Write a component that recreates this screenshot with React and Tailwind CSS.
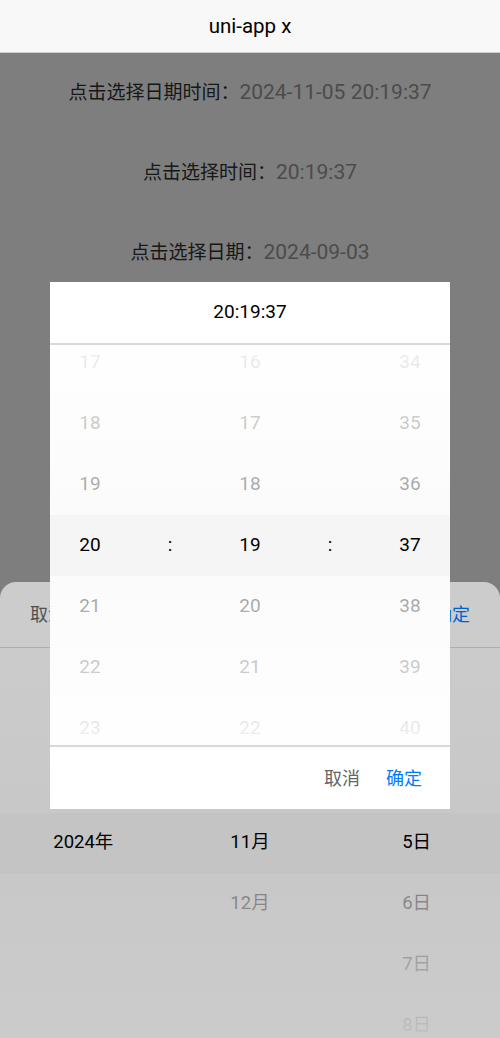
import React from 'react'

const hours = ['17', '18', '19', '20', '21', '22', '23']
const minutes = ['16', '17', '18', '19', '20', '21', '22']
const seconds = ['34', '35', '36', '37', '38', '39', '40']
const colon = ['', '', '', ':', '', '', '']

// rows above the selected one sit under the time dialog, so they are left blank
const years = ['', '', '', '2024年', '', '', '']
const months = ['', '', '', '11月', '12月', '', '']
const days = ['', '', '', '5日', '6日', '7日', '8日']

const Column = ({ items, className }) => (
  <div className={`flex flex-col justify-center overflow-hidden ${className}`}>
    {items.map((item, i) => (
      <div key={i} className="h-[61px] shrink-0 flex items-center justify-center">
        {item}
      </div>
    ))}
  </div>
)

const rows = [
  { label: '点击选择日期时间：', value: '2024-11-05 20:19:37' },
  { label: '点击选择时间：', value: '20:19:37' },
  { label: '点击选择日期：', value: '2024-09-03' },
]

export default function App() {
  return (
    <div className="relative w-full h-[1038px] overflow-hidden bg-white font-['Roboto','Noto_Sans_CJK_SC',sans-serif]">
      {/* Navigation bar */}
      <div className="h-[53px] bg-[#f8f8f8] border-b border-[#cfcfcf] flex items-center justify-center">
        <span className="text-[20.5px] text-black">uni-app x</span>
      </div>

      {/* Page content */}
      <div className="flex flex-col">
        {rows.map((row) => (
          <div key={row.label} className="h-[80px] flex items-center justify-center">
            <span className="text-[19px] text-[#333]">{row.label}</span>
            <span className="text-[21px] text-[#999]">{row.value}</span>
          </div>
        ))}
      </div>

      {/* Date picker mask */}
      <div className="absolute inset-x-0 top-[53px] bottom-0 bg-black/[0.38]"></div>

      {/* Date picker bottom sheet */}
      <div className="absolute inset-x-0 bottom-0 h-[456px] bg-white rounded-t-[16px] overflow-hidden">
        <div className="h-[66px] border-b border-[#d9d9d9] flex items-center justify-between px-[30px] text-[18px]">
          <span className="text-[#666]">取消</span>
          <span className="text-[#007aff]">确定</span>
        </div>
        <div className="relative h-[390px] bg-[#f5f5f5] flex text-[18.5px] text-black">
          <Column items={years} className="flex-1" />
          <Column items={months} className="flex-1" />
          <Column items={days} className="flex-1" />
          <div className="absolute inset-x-0 top-0 h-[164.5px] bg-linear-to-b from-white/95 to-white/60"></div>
          <div className="absolute inset-x-0 bottom-0 h-[164.5px] bg-linear-to-t from-white/95 to-white/60"></div>
        </div>
      </div>

      {/* Time picker mask + dialog */}
      <div className="absolute inset-x-0 top-[53px] bottom-0 bg-black/20 flex items-center justify-center">
        <div className="w-[400px] bg-white">
          <div className="h-[63px] border-b-2 border-[#d9d9d9] flex items-center justify-center text-[19px] text-black">
            20:19:37
          </div>
          <div className="relative h-[400px] bg-[#f5f5f5] flex text-[19px] text-black">
            <Column items={hours} className="w-[80px]" />
            <Column items={colon} className="w-[80px]" />
            <Column items={minutes} className="w-[80px]" />
            <Column items={colon} className="w-[80px]" />
            <Column items={seconds} className="w-[80px]" />
            <div className="absolute inset-x-0 top-0 h-[169.5px] bg-linear-to-b from-white/95 to-white/60"></div>
            <div className="absolute inset-x-0 bottom-0 h-[169.5px] bg-linear-to-t from-white/95 to-white/60"></div>
          </div>
          <div className="h-[64px] border-t-2 border-[#d9d9d9] flex items-center justify-end pr-[15px] text-[18px]">
            <span className="px-[13px] text-[#666]">取消</span>
            <span className="px-[13px] text-[#007aff]">确定</span>
          </div>
        </div>
      </div>
    </div>
  )
}
